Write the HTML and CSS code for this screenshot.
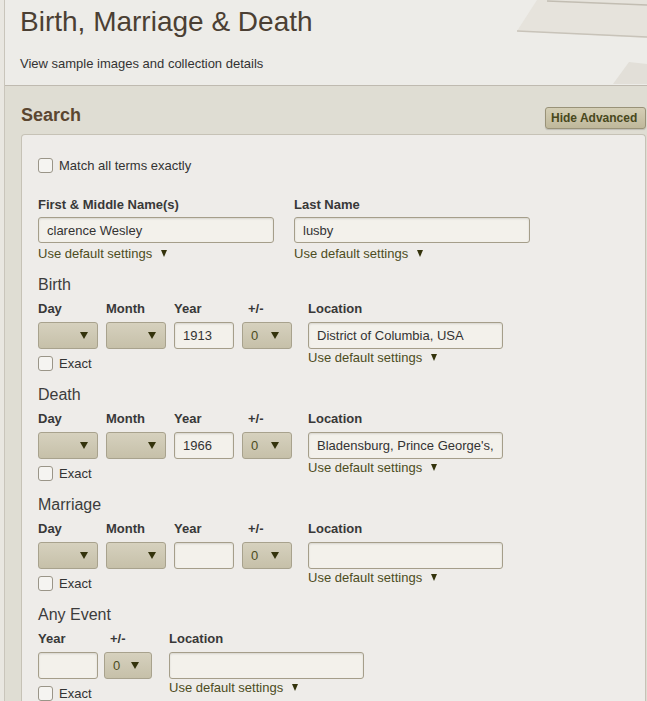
FILE: index.html
```html
<!DOCTYPE html>
<html lang="en">
<head>
    <meta charset="UTF-8">
    <meta name="viewport" content="width=device-width, initial-scale=1.0">
    <title>Birth, Marriage &amp; Death</title>
    <link rel="stylesheet" href="styles.css">
</head>
<body>
<div class="page">
    <header class="banner">
        <svg class="shelf" width="130" height="85" viewBox="0 0 130 85">
            <polygon points="20,0 130,0 130,38 0,31" fill="#e6e3dc"/>
            <line x1="30" y1="1" x2="130" y2="5" stroke="#c2bdb2" stroke-width="1.5"/>
            <line x1="0" y1="31" x2="130" y2="37" stroke="#c8c3b9" stroke-width="1.5"/>
            <polygon points="96,84 112,62 130,64 130,84" fill="#e2dfd8"/>
        </svg>
        <h1>Birth, Marriage &amp; Death</h1>
        <p class="details">View sample images and collection details</p>
    </header>

    <section class="search">
        <div class="search-head">
            <h2>Search</h2>
            <button class="btn-adv">Hide Advanced</button>
        </div>

        <div class="panel">
            <label class="check"><input type="checkbox"> Match all terms exactly</label>

            <div class="names">
                <div class="field">
                    <label class="lbl">First &amp; Middle Name(s)</label>
                    <input class="text wide" type="text" value="clarence Wesley">
                    <a class="defaults">Use default settings <i class="tri"></i></a>
                </div>
                <div class="field">
                    <label class="lbl">Last Name</label>
                    <input class="text wide" type="text" value="lusby">
                    <a class="defaults">Use default settings <i class="tri"></i></a>
                </div>
            </div>

            <!-- birth -->
            <div class="event">
                <h3>Birth</h3>
                <div class="row">
                    <div class="field">
                        <label class="lbl">Day</label>
                        <div class="select"><span></span><i class="arrow"></i></div>
                        <label class="check exact"><input type="checkbox"> Exact</label>
                    </div>
                    <div class="field">
                        <label class="lbl">Month</label>
                        <div class="select"><span></span><i class="arrow"></i></div>
                    </div>
                    <div class="field">
                        <label class="lbl">Year</label>
                        <input class="text" type="text" value="1913">
                    </div>
                    <div class="field">
                        <label class="lbl pm-lbl">+/-</label>
                        <div class="select pm"><span>0</span><i class="arrow"></i></div>
                    </div>
                    <div class="field loc">
                        <label class="lbl">Location</label>
                        <input class="text" type="text" value="District of Columbia, USA">
                        <a class="defaults">Use default settings <i class="tri"></i></a>
                    </div>
                </div>
            </div>

            <!-- death -->
            <div class="event">
                <h3>Death</h3>
                <div class="row">
                    <div class="field">
                        <label class="lbl">Day</label>
                        <div class="select"><span></span><i class="arrow"></i></div>
                        <label class="check exact"><input type="checkbox"> Exact</label>
                    </div>
                    <div class="field">
                        <label class="lbl">Month</label>
                        <div class="select"><span></span><i class="arrow"></i></div>
                    </div>
                    <div class="field">
                        <label class="lbl">Year</label>
                        <input class="text" type="text" value="1966">
                    </div>
                    <div class="field">
                        <label class="lbl pm-lbl">+/-</label>
                        <div class="select pm"><span>0</span><i class="arrow"></i></div>
                    </div>
                    <div class="field loc">
                        <label class="lbl">Location</label>
                        <input class="text" type="text" value="Bladensburg, Prince George's, Maryland">
                        <a class="defaults">Use default settings <i class="tri"></i></a>
                    </div>
                </div>
            </div>

            <!-- marriage -->
            <div class="event">
                <h3>Marriage</h3>
                <div class="row">
                    <div class="field">
                        <label class="lbl">Day</label>
                        <div class="select"><span></span><i class="arrow"></i></div>
                        <label class="check exact"><input type="checkbox"> Exact</label>
                    </div>
                    <div class="field">
                        <label class="lbl">Month</label>
                        <div class="select"><span></span><i class="arrow"></i></div>
                    </div>
                    <div class="field">
                        <label class="lbl">Year</label>
                        <input class="text" type="text" value="">
                    </div>
                    <div class="field">
                        <label class="lbl pm-lbl">+/-</label>
                        <div class="select pm"><span>0</span><i class="arrow"></i></div>
                    </div>
                    <div class="field loc">
                        <label class="lbl">Location</label>
                        <input class="text" type="text" value="">
                        <a class="defaults">Use default settings <i class="tri"></i></a>
                    </div>
                </div>
            </div>

            <!-- any event -->
            <div class="event">
                <h3>Any Event</h3>
                <div class="row any">
                    <div class="field">
                        <label class="lbl">Year</label>
                        <input class="text" type="text" value="">
                        <label class="check exact"><input type="checkbox"> Exact</label>
                    </div>
                    <div class="field">
                        <label class="lbl pm-lbl">+/-</label>
                        <div class="select pm"><span>0</span><i class="arrow"></i></div>
                    </div>
                    <div class="field loc">
                        <label class="lbl">Location</label>
                        <input class="text" type="text" value="">
                        <a class="defaults">Use default settings <i class="tri"></i></a>
                    </div>
                </div>
            </div>
        </div>
    </section>
</div>
</body>
</html>
```

FILE: styles.css
```css
:root{
    --brown: #4b3f33;
    --olive: #4d4c22;
    --olive-dark: #34330c;
    --line: #c6c2b6;
}
body {
    margin: 0;
    background: #e9e7e1;
    font-family: "Liberation Sans", Arial, sans-serif;
    color: #333;
    overflow: hidden;
}
.page {
    margin-left: 4px;
    border-left: 1px solid #c9c5bb;
    min-height: 701px;
    background: #dfddd3;
}
.banner {
    position: relative;
    background: #edece8;
    border-bottom: 1px solid #bfbab0;
    padding: 5px 0 13px 15px;
}
.banner .shelf {
    position: absolute;
    top: 0;
    right: 0;
}
.banner h1 {
    margin: 0;
    font-size: 28px;
    line-height: 34px;
    font-weight: normal;
    color: var(--brown);
}
.details {
    margin: 17px 0 0;
    font-size: 13px;
    line-height: 16px;
    color: #333;
}
.search {
    padding: 18px 1px 0 16px;
}
.search-head {
    display: flex;
    justify-content: space-between;
    align-items: flex-start;
    margin-bottom: 5px;
}
.search-head h2 {
    margin: 0;
    font-size: 18px;
    line-height: 22px;
    color: #5b4630;
}
.btn-adv {
    margin-top: 3px;
    height: 22px;
    width: 101px;
    padding: 0 0 0 5px;
    text-align: left;
    font-family: inherit;
    font-size: 12px;
    font-weight: bold;
    color: #48481c;
    background: linear-gradient(#d4ceb5, #bfb89b);
    border: 1px solid #999278;
    border-radius: 3px;
    box-shadow: 0 1px 1px rgba(0,0,0,0.15);
}
.panel {
    background: #eeece9;
    border: 1px solid var(--line);
    border-bottom: none;
    border-radius: 4px 4px 0 0;
    padding: 22px 16px 0;
    min-height: 600px;
}
.check {
    display: flex;
    align-items: center;
    gap: 6px;
    height: 16px;
    font-size: 13px;
    color: #333;
}
.check input {
    appearance: none;
    -webkit-appearance: none;
    margin: 0;
    width: 15px;
    height: 15px;
    border: 1px solid #9a9588;
    border-radius: 3px;
    background: #f5f4f1;
}
.names {
    display: flex;
    gap: 20px;
    margin-top: 24px;
    margin-bottom: 14px;
}
.names .defaults {
    margin-top: 3px;
}
.field {
    display: flex;
    flex-direction: column;
}
.lbl {
    font-size: 13px;
    line-height: 16px;
    font-weight: bold;
    color: #383838;
    margin-bottom: 4px;
}
.pm-lbl {
    padding-left: 6px;
}
.text {
    box-sizing: border-box;
    width: 60px;
    height: 27px;
    margin: 0;
    padding: 0 8px;
    font-family: inherit;
    font-size: 13px;
    color: #333;
    background: #f3f1eb;
    border: 1px solid #a59e8a;
    border-radius: 3px;
    box-shadow: inset 0 1px 2px rgba(0,0,0,0.12);
}
.text.wide {
    width: 236px;
    height: 26px;
}
.loc .text {
    width: 195px;
}
.defaults {
    margin-top: 1px;
    font-size: 13px;
    line-height: 16px;
    color: var(--olive);
    white-space: nowrap;
}
.tri {
    display: inline-block;
    margin-left: 5px;
    border-left: 3.5px solid transparent;
    border-right: 3.5px solid transparent;
    border-top: 7px solid var(--olive-dark);
    vertical-align: 1px;
}
.event {
    padding-bottom: 15px;
}
.event h3 {
    margin: 0;
    font-size: 16px;
    line-height: 18px;
    font-weight: normal;
    color: #3c3c3c;
}
.row {
    display: grid;
    grid-template-columns: 60px 60px 60px 50px 195px;
    column-gap: 8px;
    margin-top: 7px;
}
.row .loc {
    margin-left: 8px;
}
.row.any {
    grid-template-columns: 60px 48px 195px;
    column-gap: 6px;
}
.row.any .loc {
    margin-left: 11px;
}
.select {
    box-sizing: border-box;
    height: 27px;
    margin-top: 1px;
    display: flex;
    align-items: center;
    justify-content: space-between;
    padding: 0 9px 0 8px;
    font-size: 13px;
    color: var(--olive);
    background: linear-gradient(#d6d1be, #c6c0a9);
    border: 1px solid #a8a28d;
    border-radius: 3px;
}
.row .text {
    margin-top: 1px;
}
.select.pm {
    padding-right: 12px;
}
.arrow {
    border-left: 4px solid transparent;
    border-right: 4px solid transparent;
    border-top: 7px solid var(--olive-dark);
}
.exact {
    margin-top: 6px;
}
```
